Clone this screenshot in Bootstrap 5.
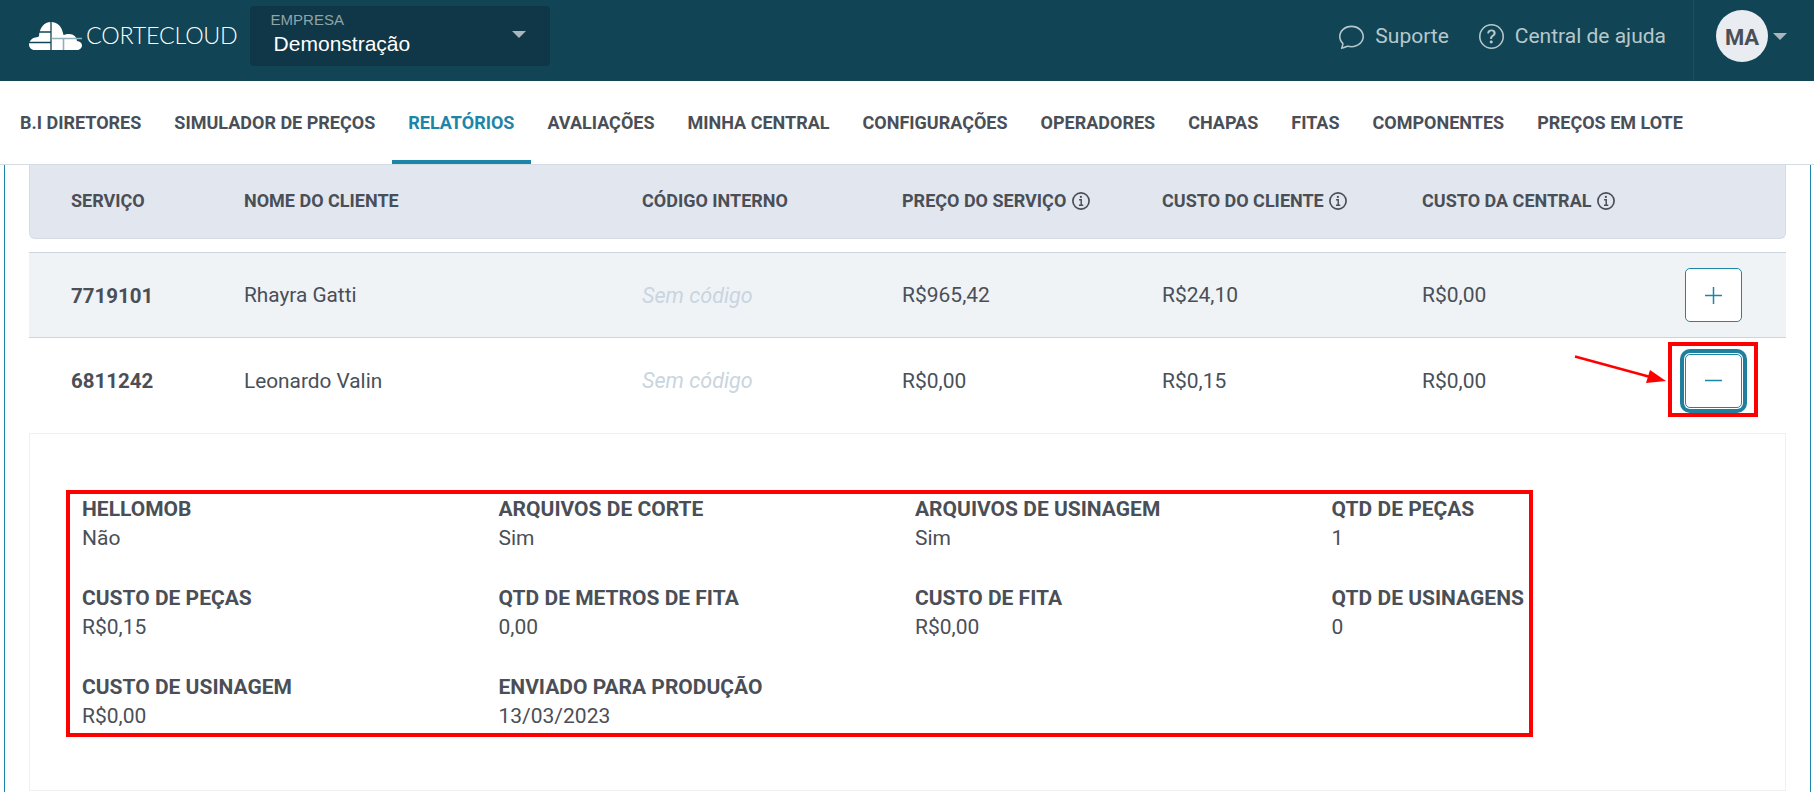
<!DOCTYPE html>
<html lang="pt-BR">
<head>
<meta charset="utf-8">
<title>CorteCloud</title>
<link href="https://cdn.jsdelivr.net/npm/bootstrap@5.3.0/dist/css/bootstrap.min.css" rel="stylesheet">
<style>
html,body{height:792px;overflow:hidden;background:#fff}
body{font-family:Roboto,sans-serif;color:#4a4f57;font-size:18px}
.cc-top{height:81px;background:#114454;padding:0 0 9px}
.cc-logo-txt{font-family:Lato,sans-serif;font-weight:300;font-size:23.300px;color:#fff;letter-spacing:-.2px;line-height:1}
.cc-company{width:300px;height:60px;background:#0f3747;border-radius:4px;margin-left:12px;padding:2px 24px 6px 21px;font-family:"Liberation Sans",sans-serif}
.cc-company-lbl{font-size:15px;color:#8fa5a8;line-height:20px}
.cc-company-val{font-size:21px;color:#fff;line-height:28px;padding-left:3px}
.cc-caret{width:0;height:0;border-left:7px solid transparent;border-right:7px solid transparent;border-top:7px solid #a9b6bb}
.cc-toplink{color:#b7c8cc;font-size:21px;text-decoration:none;gap:11px;padding-top:1px}
.cc-divider{width:1px;height:81px;background:#1d5162;margin-left:27px;margin-bottom:-9px}
.cc-avatar{width:52px;height:52px;border-radius:50%;background:#e9ecf1;color:#4a4f57;font-weight:700;font-size:22px;padding-top:2px}
.cc-menu{height:84px;border-bottom:1px solid #d5dde4;padding-left:4px}
.cc-menu .nav-link{font-weight:700;font-size:18px;color:#4a4f57;padding:0 16.500px 0;height:83px;line-height:84px;border-bottom:4px solid transparent;box-sizing:border-box}
.cc-menu li:first-child .nav-link{padding-left:16px}
.cc-menu .nav-link.active{color:#1c86a8;border-bottom-color:#1c86a8}
.cc-main{height:627px;margin:0 3px 0 4px;border-left:1px solid #1c86a8;border-right:1px solid #1c86a8;padding:0 24px;position:relative}
.cc-cols{display:grid;grid-template-columns:173px 398px 260px 260px 260px 1fr auto;padding-left:42px;align-items:center}
.cc-head{height:74px;background:#e2e7ef;border:1px solid #d5dce4;border-top:0;border-radius:0 0 6px 6px;font-weight:700;font-size:18px;margin-bottom:13px;padding-left:41px;padding-bottom:2px}
.cc-head svg{width:18px;height:18px;margin-left:1px;vertical-align:-3px}
.cc-row{height:86px;border-bottom:1px solid #ccd5de;font-size:21px}
.cc-row>span,.cc-row>b{padding-top:2px}
.cc-row-a{background:#f0f3f6;border-top:1px solid #ccd5de}
.cc-row-b{height:95px;border-bottom:0;padding-bottom:10px}
.cc-row b{font-weight:700;font-size:20.500px}
.cc-name{font-size:20.800px}
.cc-nocode{font-style:italic;color:#c9d5e0;font-weight:400;font-size:21.600px}
.cc-btn{width:57px;height:54px;padding:0;background:#fff;border:1px solid #1c86a8;border-radius:5px;color:#1c86a8;margin-right:44px}
.cc-btn:hover{background:#fff}
.cc-btn-on{box-shadow:0 0 0 1px #fff,0 0 0 5px #1f7f9c}
.cc-detail{height:358px;border:1px solid #eeeff1;padding:62px 38px 0 52px}
.cc-detail .row{width:1666px}
.cc-cell{height:89px}
.cc-lbl{font-weight:700;font-size:21px;line-height:27px;margin-bottom:2px}
.cc-val{line-height:27px;font-size:21px}
.cc-redbox{position:absolute;border:4px solid #f00;pointer-events:none}
.cc-red-a{left:61px;top:325px;width:1467px;height:247px}
.cc-red-b{left:1663px;top:177px;width:90px;height:75px}
.cc-arrow{position:absolute;left:1565px;top:185px;width:100px;height:40px}
</style>
</head>
<body>
<nav class="navbar cc-top d-flex align-items-center flex-nowrap">
  <div class="d-flex align-items-center" style="padding-left:29px">
    <svg width="53" height="28" viewBox="0 0 53 28" aria-hidden="true">
      <path fill="#fff" d="M5.500 28C2.500 28 0 25.500 0 22.500 0 19 3 16 6.500 15.500 8 15.200 9.500 15.200 10 14 10.500 6 15 0 22 0 29 0 33 5 34.500 13 36 12.500 38 12 40 12 45 12 47.500 15 48 19 51 19.500 53 21 53 23.500 53 26 50.500 28 48 28Z"/>
      <path stroke="#114454" stroke-width="1.300" fill="none" d="M22 0V28M0 20.500H22M10 10H22"/>
      <path stroke="#8fb0ba" stroke-width="1.600" fill="none" d="M22.500 16.500H53M34.500 16.500V28"/>
    </svg>
    <span class="cc-logo-txt ms-1">CORTECLOUD</span>
  </div>
  <div class="cc-company d-flex align-items-center justify-content-between">
    <div>
      <div class="cc-company-lbl">EMPRESA</div>
      <div class="cc-company-val">Demonstração</div>
    </div>
    <span class="cc-caret"></span>
  </div>
  <div class="ms-auto d-flex align-items-center h-100">
    <a href="#" class="cc-toplink d-flex align-items-center">
      <svg width="25" height="25" viewBox="0 0 16 16" fill="#b7c8cc" aria-hidden="true"><path d="M2.678 11.894a1 1 0 0 1 .287.801 10.97 10.97 0 0 1-.398 2c1.395-.323 2.247-.697 2.634-.893a1 1 0 0 1 .71-.074A8.06 8.06 0 0 0 8 14c3.996 0 7-2.807 7-6 0-3.192-3.004-6-7-6S1 4.808 1 8c0 1.468.617 2.83 1.678 3.894zm-.493 3.905a21.682 21.682 0 0 1-.713.129c-.2.032-.352-.176-.273-.362a9.68 9.68 0 0 0 .244-.637l.003-.01c.248-.72.45-1.548.524-2.319C.743 11.37 0 9.76 0 8c0-3.866 3.582-7 8-7s8 3.134 8 7-3.582 7-8 7a9.06 9.06 0 0 1-2.347-.306c-.52.263-1.639.742-3.468 1.105z"/></svg>
      Suporte
    </a>
    <a href="#" class="cc-toplink d-flex align-items-center" style="margin-left:30px">
      <svg width="25" height="25" viewBox="0 0 16 16" fill="#b7c8cc" aria-hidden="true"><path d="M8 15A7 7 0 1 1 8 1a7 7 0 0 1 0 14zm0 1A8 8 0 1 0 8 0a8 8 0 0 0 0 16z"/><path d="M5.255 5.786a.237.237 0 0 0 .241.247h.825c.138 0 .248-.113.266-.25.09-.656.54-1.134 1.342-1.134.686 0 1.314.343 1.314 1.168 0 .635-.374.927-.965 1.371-.673.489-1.206 1.06-1.168 1.987l.003.217a.25.25 0 0 0 .25.246h.811a.25.25 0 0 0 .25-.25v-.105c0-.718.273-.927 1.01-1.486.609-.463 1.244-.977 1.244-2.056 0-1.511-1.276-2.241-2.673-2.241-1.267 0-2.655.59-2.75 2.286zm1.557 5.763c0 .533.425.927 1.01.927.609 0 1.028-.394 1.028-.927 0-.552-.42-.94-1.029-.94-.584 0-1.009.388-1.009.94z"/></svg>
      Central de ajuda
    </a>
    <span class="cc-divider"></span>
    <span class="cc-avatar d-flex align-items-center justify-content-center" style="margin-left:22px">MA</span>
    <span class="cc-caret" style="margin:0 27px 0 5px"></span>
  </div>
</nav>

<ul class="nav cc-menu flex-nowrap">
  <li class="nav-item"><a class="nav-link" href="#">B.I DIRETORES</a></li>
  <li class="nav-item"><a class="nav-link" href="#">SIMULADOR DE PREÇOS</a></li>
  <li class="nav-item"><a class="nav-link active" href="#">RELATÓRIOS</a></li>
  <li class="nav-item"><a class="nav-link" href="#">AVALIAÇÕES</a></li>
  <li class="nav-item"><a class="nav-link" href="#">MINHA CENTRAL</a></li>
  <li class="nav-item"><a class="nav-link" href="#">CONFIGURAÇÕES</a></li>
  <li class="nav-item"><a class="nav-link" href="#">OPERADORES</a></li>
  <li class="nav-item"><a class="nav-link" href="#">CHAPAS</a></li>
  <li class="nav-item"><a class="nav-link" href="#">FITAS</a></li>
  <li class="nav-item"><a class="nav-link" href="#">COMPONENTES</a></li>
  <li class="nav-item"><a class="nav-link" href="#">PREÇOS EM LOTE</a></li>
</ul>

<main class="cc-main">
  <div class="cc-cols cc-head">
    <span>SERVIÇO</span>
    <span>NOME DO CLIENTE</span>
    <span>CÓDIGO INTERNO</span>
    <span>PREÇO DO SERVIÇO <svg viewBox="0 0 16 16" fill="none" stroke="#4a4f57" aria-hidden="true"><circle cx="8" cy="8" r="7.200" stroke-width="1.500"/><path stroke-width="1.300" d="M6.300 6.900H8.200V12M6.200 11.800H10"/><circle cx="7.900" cy="4.400" r="1" fill="#4a4f57" stroke="none"/></svg></span>
    <span>CUSTO DO CLIENTE <svg viewBox="0 0 16 16" fill="none" stroke="#4a4f57" aria-hidden="true"><circle cx="8" cy="8" r="7.200" stroke-width="1.500"/><path stroke-width="1.300" d="M6.300 6.900H8.200V12M6.200 11.800H10"/><circle cx="7.900" cy="4.400" r="1" fill="#4a4f57" stroke="none"/></svg></span>
    <span>CUSTO DA CENTRAL <svg viewBox="0 0 16 16" fill="none" stroke="#4a4f57" aria-hidden="true"><circle cx="8" cy="8" r="7.200" stroke-width="1.500"/><path stroke-width="1.300" d="M6.300 6.900H8.200V12M6.200 11.800H10"/><circle cx="7.900" cy="4.400" r="1" fill="#4a4f57" stroke="none"/></svg></span>
  </div>
  <div class="cc-cols cc-row cc-row-a">
    <b>7719101</b><span class="cc-name">Rhayra Gatti</span><span class="cc-nocode">Sem código</span><span>R$965,42</span><span>R$24,10</span><span>R$0,00</span>
    <button class="btn cc-btn d-flex align-items-center justify-content-center" aria-label="Expandir"><svg width="17" height="17" viewBox="0 0 17 17" stroke="#1c86a8" stroke-width="1.500"><path d="M8.500 0v17M0 8.500h17"/></svg></button>
  </div>
  <div class="cc-cols cc-row cc-row-b">
    <b>6811242</b><span class="cc-name">Leonardo Valin</span><span class="cc-nocode">Sem código</span><span>R$0,00</span><span>R$0,15</span><span>R$0,00</span>
    <button class="btn cc-btn cc-btn-on d-flex align-items-center justify-content-center" aria-label="Recolher"><svg width="17" height="3" viewBox="0 0 17 3" stroke="#1c86a8" stroke-width="1.500"><path d="M0 1.500h17"/></svg></button>
  </div>
  <div class="cc-detail">
    <div class="row g-0">
      <div class="col-3 cc-cell"><div class="cc-lbl">HELLOMOB</div><div class="cc-val">Não</div></div>
      <div class="col-3 cc-cell"><div class="cc-lbl">ARQUIVOS DE CORTE</div><div class="cc-val">Sim</div></div>
      <div class="col-3 cc-cell"><div class="cc-lbl">ARQUIVOS DE USINAGEM</div><div class="cc-val">Sim</div></div>
      <div class="col-3 cc-cell"><div class="cc-lbl">QTD DE PEÇAS</div><div class="cc-val">1</div></div>
      <div class="col-3 cc-cell"><div class="cc-lbl">CUSTO DE PEÇAS</div><div class="cc-val">R$0,15</div></div>
      <div class="col-3 cc-cell"><div class="cc-lbl">QTD DE METROS DE FITA</div><div class="cc-val">0,00</div></div>
      <div class="col-3 cc-cell"><div class="cc-lbl">CUSTO DE FITA</div><div class="cc-val">R$0,00</div></div>
      <div class="col-3 cc-cell"><div class="cc-lbl">QTD DE USINAGENS</div><div class="cc-val">0</div></div>
      <div class="col-3 cc-cell"><div class="cc-lbl">CUSTO DE USINAGEM</div><div class="cc-val">R$0,00</div></div>
      <div class="col-3 cc-cell"><div class="cc-lbl">ENVIADO PARA PRODUÇÃO</div><div class="cc-val">13/03/2023</div></div>
    </div>
  </div>
  <div class="cc-redbox cc-red-a"></div>
  <div class="cc-redbox cc-red-b"></div>
  <svg class="cc-arrow" viewBox="0 0 100 40" aria-hidden="true"><path d="M5 6.500 L84 28" stroke="#f00" stroke-width="2.500"/><path d="M96 31 L76 33 L80 20z" fill="#f00"/></svg>
</main>
<script src="https://cdn.jsdelivr.net/npm/bootstrap@5.3.0/dist/js/bootstrap.bundle.min.js"></script>
</body>
</html>
